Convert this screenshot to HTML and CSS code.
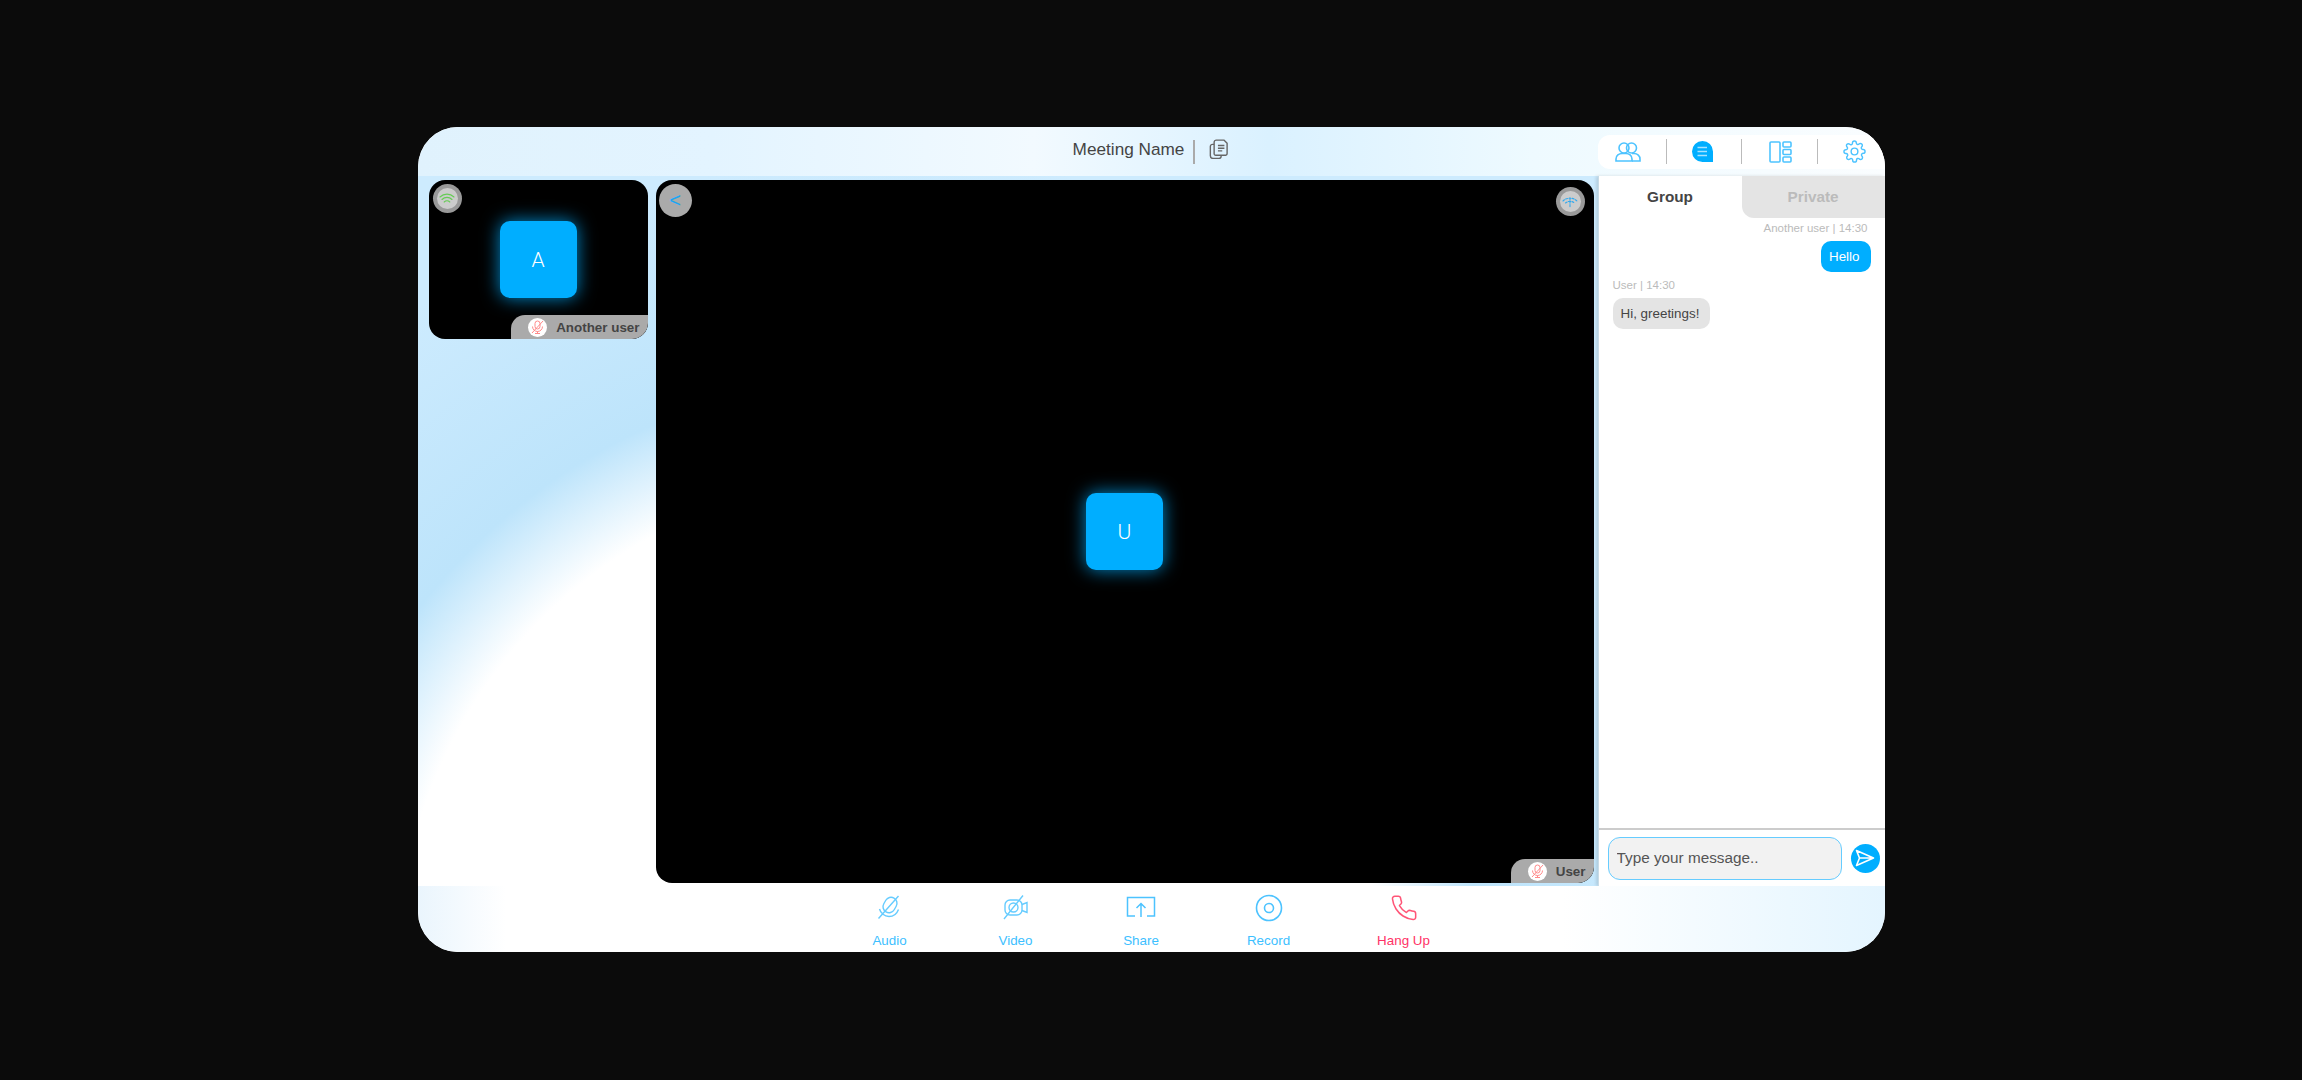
FILE: index.html
```html
<!DOCTYPE html>
<html lang="en">
<head>
    <meta charset="UTF-8">
    <title>Meeting</title>
    <link rel="stylesheet" href="styles.css">
</head>
<body>
    <div class="frame">
        <header class="topbar">
            <div></div>
            <div class="meeting-info">
                <span class="meeting-name">Meeting Name</span>
                <span class="meeting-sep"></span>
                <svg class="copy-icon" width="20" height="20" viewBox="1 0.5 18 18.5" fill="none" stroke="#666" stroke-width="1.3" stroke-linejoin="round">
                    <path d="M5.5 5.5h-1.5a2 2 0 0 0-2 2v8.5a2.5 2.5 0 0 0 2.5 2.5h5.500a2 2 0 0 0 2-2v-1"/>
                    <path d="M5.5 14.500v-11a2 2 0 0 1 2-2h7l3 3v9.500a1.500 1.500 0 0 1-1.500 1.500h-9a1.500 1.500 0 0 1-1.500-1z"/>
                    <path d="M9 6.5h6M9 9h6M9 11.500h4"/>
                </svg>
            </div>
            <nav class="panel-tabs">
                <svg width="26" height="22" viewBox="0 0 26 22" fill="none" stroke="#4dc3ff" stroke-width="1.6">
                    <circle cx="9" cy="7" r="5"/>
                    <circle cx="16.5" cy="7" r="5"/>
                    <path d="M1 20v-2c0-3.500 3-5.500 6-5.500h4c3 0 6 2 6 5.500v2z"/>
                    <path d="M17 12.500h2c3.500 0 6 2.500 6 5.500v2h-8"/>
                </svg>
                <span class="tab-sep"></span>
                <svg class="chat-icon" width="24" height="22" viewBox="0 0 24 22">
                    <path d="M12.5 1a10.500 10.500 0 1 0 0 21h10.500v-10.500a10.500 10.500 0 0 0-10.500-10.500z" fill="#00aeff"/>
                    <path d="M7.5 7.500h9.500M7.500 11.500h9.500M7.500 15.500h9.500" stroke="#a8e2ff" stroke-width="1.5"/>
                </svg>
                <span class="tab-sep"></span>
                <svg width="24" height="24" viewBox="0 0 24 24" fill="none" stroke="#4dc3ff" stroke-width="1.6">
                    <rect x="2" y="2" width="10" height="20" rx="1"/>
                    <rect x="15" y="2" width="8" height="5" rx="1"/>
                    <rect x="15" y="9.5" width="8" height="5" rx="1"/>
                    <rect x="15" y="17" width="8" height="5" rx="1"/>
                </svg>
                <span class="tab-sep"></span>
                <svg width="23" height="23" viewBox="0 0 24 24" fill="none" stroke="#4dc3ff" stroke-width="1.5" stroke-linejoin="round">
                    <circle cx="12" cy="12" r="3.5"/>
                    <path d="M19.4 15a1.650 1.650 0 0 0 .33 1.820l.06.06a2 2 0 1 1-2.830 2.830l-.06-.06a1.650 1.650 0 0 0-2.800 1.170V21a2 2 0 1 1-4 0v-.09a1.650 1.650 0 0 0-2.800-1.170l-.06.06a2 2 0 1 1-2.830-2.830l.06-.06a1.650 1.650 0 0 0-1.170-2.800H3a2 2 0 1 1 0-4h.09a1.650 1.650 0 0 0 1.170-2.800l-.06-.06a2 2 0 1 1 2.830-2.830l.06.06a1.650 1.650 0 0 0 2.800-1.170V3a2 2 0 1 1 4 0v.09a1.650 1.650 0 0 0 2.800 1.170l.06-.06a2 2 0 1 1 2.830 2.830l-.06.06a1.650 1.650 0 0 0 1.170 2.800H21a2 2 0 1 1 0 4h-.09a1.650 1.650 0 0 0-1.510 1.110z"/>
                </svg>
            </nav>
        </header>

        <main class="content">
            <div class="thumbs">
                <div class="video thumb">
                    <span class="signal">
                        <span class="signal-inner">
                            <svg width="16" height="14" viewBox="0 0 16 14" fill="none" stroke="#66cc55" stroke-width="1.1" stroke-linecap="round">
                                <path d="M1 5a10 10 0 0 1 14 0M3 7.500a7 7 0 0 1 10 0M5.200 10a4 4 0 0 1 5.600 0"/>
                            </svg>
                        </span>
                    </span>
                    <div class="avatar">A</div>
                    <div class="name-tag">
                        <span class="mic-badge">
                            <svg width="13" height="14" viewBox="0 0 13 14" fill="none" stroke="#ff8a8a" stroke-width="1">
                                <rect x="4" y="1" width="5" height="8" rx="2.5"/>
                                <path d="M1.5 6.500a5 5 0 0 0 10 0M6.500 11.500v2M4 13.500h5M1 13L12 1"/>
                            </svg>
                        </span>
                        Another user
                    </div>
                </div>
            </div>

            <div class="video stage">
                <button class="back-btn">&lt;</button>
                <span class="signal signal-right">
                    <span class="signal-inner">
                        <svg width="16" height="14" viewBox="0 0 16 14" fill="none" stroke="#33aaee" stroke-width="1.1" stroke-linecap="round" stroke-dasharray="2 1.3">
                            <path d="M1 6a10 10 0 0 1 14 0M3.500 8a7 7 0 0 1 9 0M8 3v9"/>
                        </svg>
                    </span>
                </span>
                <div class="avatar">U</div>
                <div class="name-tag">
                    <span class="mic-badge">
                        <svg width="13" height="14" viewBox="0 0 13 14" fill="none" stroke="#ff8a8a" stroke-width="1">
                            <rect x="4" y="1" width="5" height="8" rx="2.5"/>
                            <path d="M1.5 6.500a5 5 0 0 0 10 0M6.500 11.500v2M4 13.500h5M1 13L12 1"/>
                        </svg>
                    </span>
                    User
                </div>
            </div>

            <aside class="chat">
                <div class="chat-tabs">
                    <div class="chat-tab active">Group</div>
                    <div class="chat-tab">Private</div>
                </div>
                <div class="messages">
                    <div class="meta meta-right">Another user | 14:30</div>
                    <div class="bubble bubble-me">Hello</div>
                    <div class="meta">User | 14:30</div>
                    <div class="bubble">Hi, greetings!</div>
                </div>
                <div class="composer">
                    <input class="composer-input" type="text" placeholder="Type your message..">
                    <span class="send-btn">
                        <svg width="20" height="18" viewBox="0 0 20 18" fill="none" stroke="#fff" stroke-width="1.6" stroke-linejoin="round">
                            <path d="M1.5 1.500L18.500 9 1.500 16.500 4.500 9zM4.500 9h14"/>
                        </svg>
                    </span>
                </div>
            </aside>
        </main>

        <footer class="toolbar">
            <div class="tool">
                <svg width="26" height="26" viewBox="0 0 26 26" fill="none" stroke="#66ccff" stroke-width="1.4">
                    <rect x="7" y="3" width="12" height="16" rx="6" transform="rotate(30 13 11)"/>
                    <path d="M2.5 15c1 4 5 7.500 9.500 7.500 4.500 0 8-3 9.500-7M1.500 24.500L21.500 2"/>
                </svg>
                <span>Audio</span>
            </div>
            <div class="tool">
                <svg width="26" height="26" viewBox="0 0 26 26" fill="none" stroke="#66ccff" stroke-width="1.4">
                    <rect x="2" y="6" width="17" height="15" rx="5"/>
                    <circle cx="10.5" cy="13.5" r="4.5"/>
                    <path d="M19 10.500l5-2v10l-5-2M1 25L20 1.500"/>
                </svg>
                <span>Video</span>
            </div>
            <div class="tool">
                <svg width="30" height="24" viewBox="0 -2 30 24" fill="none" stroke="#4dc3ff" stroke-width="1.5">
                    <path d="M9 20H1.500V1.500h27V20H21"/>
                    <path d="M15 21V7.500M10.500 12L15 7.500l4.500 4.500"/>
                </svg>
                <span>Share</span>
            </div>
            <div class="tool">
                <svg width="28" height="28" viewBox="0 0 28 28" fill="none" stroke="#4dc3ff" stroke-width="1.6">
                    <circle cx="14" cy="14" r="12.5"/>
                    <circle cx="14" cy="14" r="4.5"/>
                </svg>
                <span>Record</span>
            </div>
            <div class="tool tool-end">
                <svg width="28" height="28" viewBox="0 0 24 24" fill="none" stroke="#ff5577" stroke-width="1.3" stroke-linejoin="round">
                    <path d="M22 16.920v3a2 2 0 0 1-2.180 2 19.790 19.790 0 0 1-8.630-3.070 19.500 19.500 0 0 1-6-6 19.790 19.790 0 0 1-3.070-8.670A2 2 0 0 1 4.110 2h3a2 2 0 0 1 2 1.720 12.840 12.840 0 0 0 .7 2.810 2 2 0 0 1-.45 2.110L8.090 9.910a16 16 0 0 0 6 6l1.270-1.270a2 2 0 0 1 2.110-.45 12.840 12.840 0 0 0 2.810.7A2 2 0 0 1 22 16.92z"/>
                </svg>
                <span>Hang Up</span>
            </div>
        </footer>
    </div>
</body>
</html>
```

FILE: styles.css
```css
* {
    box-sizing: border-box;
}
body {
    margin: 0;
    height: 1080px;
    padding-top: 127px;
    display: flex;
    align-items: flex-start;
    justify-content: center;
    background-color: #0b0b0b;
    font-family: "Liberation Sans", Arial, sans-serif;
    overflow: hidden;
}
.frame {
    width: 1467px;
    height: 825px;
    display: flex;
    flex-direction: column;
    border-radius: 40px;
    overflow: hidden;
    background-color: #fff;
}

/* barra de cima */
.topbar {
    height: 49px;
    flex-shrink: 0;
    display: grid;
    grid-template-columns: 1fr auto 1fr;
    align-items: center;
    background: linear-gradient(90deg, #e0f2fd 0%, #e3f4ff 20%, #f2faff 42%, #daf1ff 58%, #eefaff 76%, #fafdff 100%);
}
.meeting-info {
    display: flex;
    align-items: center;
}
.meeting-name {
    font-size: 17.2px;
    color: #444;
    margin-top: -4px;
}
.meeting-sep {
    width: 2px;
    height: 24px;
    background-color: #aaa;
    margin: 0 14px 0 9px;
}
.copy-icon {
    margin-top: -5px;
}
.panel-tabs {
    justify-self: end;
    width: 287px;
    height: 34px;
    display: flex;
    align-items: center;
    justify-content: space-between;
    padding: 0 18px 0 17px;
    background-color: #fff;
    border-radius: 12px 0 0 12px;
}
.chat-icon {
    margin: -2px 2px 0 -2px;
}
.tab-sep {
    width: 1px;
    height: 25px;
    background-color: #bbb;
}

/* meio */
.content {
    flex: 1;
    display: flex;
    min-height: 0;
    background: radial-gradient(circle at 470px 790px, #fff 490px, #bde4fb 590px, #cdebfe 810px);
}
.thumbs {
    width: 219px;
    margin: 4px 8px 0 11px;
}
.video {
    position: relative;
    display: flex;
    align-items: center;
    justify-content: center;
    background-color: #000;
    border-radius: 16px;
    overflow: hidden;
}
.thumb {
    height: 159px;
}
.stage {
    width: 938px;
    margin: 4px 0 3px 0;
}
.avatar {
    width: 77px;
    height: 77px;
    display: flex;
    align-items: center;
    justify-content: center;
    color: #fff;
    font-family: Roboto, sans-serif;
    font-weight: 300;
    font-size: 21px;
    background-color: #00aeff;
    border-radius: 10px;
    box-shadow: 0 0 18px rgba(0, 174, 255, 0.8);
}
.signal {
    position: absolute;
    top: 4px;
    left: 4px;
    width: 29px;
    height: 29px;
    display: flex;
    align-items: center;
    justify-content: center;
    background-color: #999;
    border-radius: 50%;
}
.signal-right {
    top: 7px;
    left: auto;
    right: 9px;
}
.signal-inner {
    width: 21px;
    height: 21px;
    display: flex;
    align-items: center;
    justify-content: center;
    background-color: #ccc;
    border-radius: 50%;
}
.back-btn {
    position: absolute;
    top: 4px;
    left: 3px;
    width: 33px;
    height: 33px;
    padding: 0;
    border: none;
    border-radius: 50%;
    color: #1aa7f5;
    font-size: 20px;
    font-family: "Liberation Sans", Arial, sans-serif;
    background-color: #aaa;
}
.name-tag {
    position: absolute;
    right: 0;
    bottom: 0;
    height: 24px;
    display: flex;
    align-items: center;
    gap: 9px;
    padding: 0 8px 0 17px;
    font-size: 13.4px;
    font-weight: bold;
    color: #444;
    background-color: #aaa;
    border-radius: 14px 0 16px 0;
}
.mic-badge {
    width: 19px;
    height: 19px;
    display: flex;
    align-items: center;
    justify-content: center;
    background-color: #fff;
    border-radius: 50%;
}

/* chat */
.chat {
    width: 287px;
    margin-left: 4px;
    display: flex;
    flex-direction: column;
    background-color: #fff;
    border-left: 1px solid #c8dbe6;
    box-shadow: -2px 0 3px rgba(0, 0, 0, 0.12);
}
.chat-tabs {
    height: 42px;
    display: flex;
    flex-shrink: 0;
}
.chat-tab {
    flex: 1;
    display: flex;
    align-items: center;
    justify-content: center;
    font-size: 15.3px;
    font-weight: bold;
    color: #bbb;
    background-color: #e4e4e4;
    border-radius: 0 0 0 12px;
}
.chat-tab.active {
    color: #444;
    background-color: #fff;
    border-radius: 0;
}
.messages {
    flex: 1;
    display: flex;
    flex-direction: column;
    align-items: flex-start;
    padding: 3px 14px 0 14px;
}
.meta {
    font-size: 11.5px;
    line-height: 14px;
    color: #bbb;
    margin-bottom: 6px;
}
.meta-right {
    align-self: flex-end;
    margin-right: 3px;
}
.bubble {
    font-size: 13.4px;
    line-height: 31px;
    height: 31px;
    padding: 0 11px 0 8px;
    color: #444;
    background-color: #e4e4e4;
    border-radius: 10px;
}
.bubble-me {
    align-self: flex-end;
    color: #fff;
    background-color: #00aeff;
    margin-bottom: 6px;
}
.composer {
    height: 58px;
    flex-shrink: 0;
    display: flex;
    align-items: center;
    gap: 9px;
    padding: 0 5px 0 9px;
    border-top: 2px solid #ccc;
}
.composer-input {
    width: 234px;
    height: 43px;
    padding: 0 8px;
    font-size: 15.3px;
    font-family: "Liberation Sans", Arial, sans-serif;
    background-color: #f2f2f2;
    border: 1.5px solid #66ccff;
    border-radius: 12px;
}
.composer-input::placeholder {
    color: #555;
}
.send-btn {
    width: 29px;
    height: 29px;
    display: flex;
    align-items: center;
    justify-content: center;
    background-color: #00aeff;
    border-radius: 50%;
}

/* barra de baixo */
.toolbar {
    height: 66px;
    flex-shrink: 0;
    display: grid;
    grid-template-columns: 126px 126px 125px 130px 140px;
    justify-content: center;
    padding: 8px 2px 0 0;
    background: linear-gradient(90deg, #eaf5fd 0%, #fff 6%, #fff 78%, #e4f5ff 100%);
}
.tool {
    display: flex;
    flex-direction: column;
    align-items: center;
    justify-content: space-between;
    height: 54px;
    font-size: 13.4px;
    color: #3dbfff;
}
.tool-end {
    color: #ff3366;
}
```
